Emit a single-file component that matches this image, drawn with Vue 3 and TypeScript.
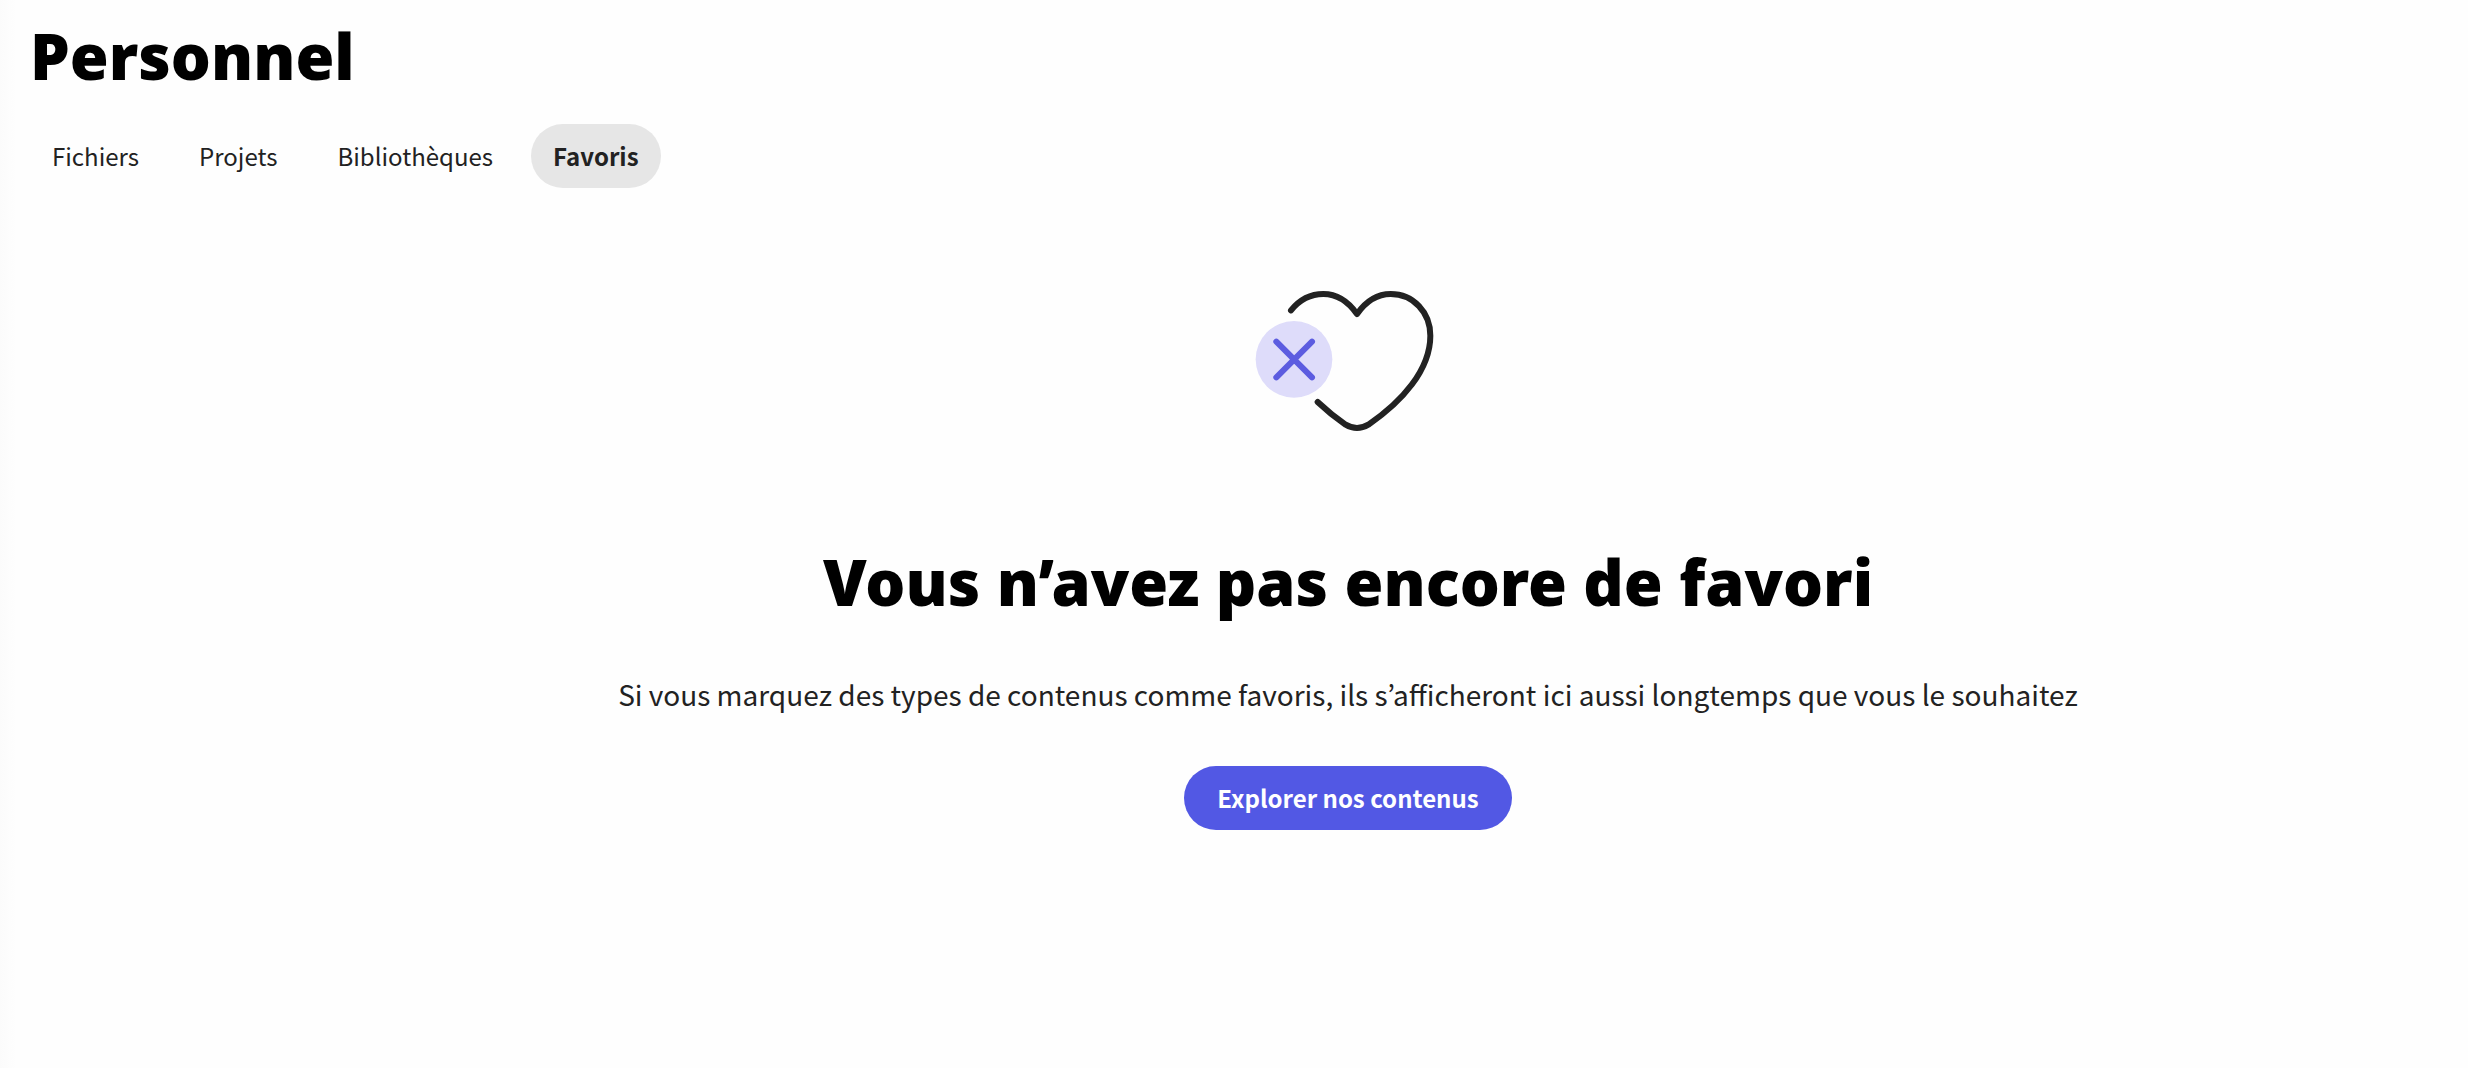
<script setup lang="ts">
import { ref } from 'vue'

const tabs: string[] = ['Fichiers', 'Projets', 'Bibliothèques', 'Favoris']
const active = ref<string>('Favoris')
</script>

<template>
  <main class="page">
    <h1 class="title">Personnel</h1>
    <nav class="tabs" aria-label="Personnel">
      <button
        v-for="tab in tabs"
        :key="tab"
        type="button"
        class="tab"
        :class="{ active: tab === active }"
        @click="active = tab"
      >{{ tab }}</button>
    </nav>
    <section class="empty">
      <svg class="art" viewBox="66 54 576 438" aria-hidden="true">
        <path
          class="heart"
          d="M183 121C208 90 243 72 280 72C320 72 355 95 381 132C407 95 442 72 482 72C550 72 601 127 601 197C601 300 515 396 415 464Q381 484 347 464Q303 434 263 396"
        />
        <circle class="disc" cx="192" cy="268" r="115" />
        <path class="cross" d="M139 215L246 322M246 215L139 322" />
      </svg>
      <h2 class="heading">Vous n’avez pas encore de favori</h2>
      <p class="text">Si vous marquez des types de contenus comme favoris, ils s’afficheront ici aussi longtemps que vous le souhaitez</p>
      <button type="button" class="cta">Explorer nos contenus</button>
    </section>
  </main>
</template>

<style>
body {
  background: #fefefe;
}
</style>

<style scoped>
.page {
  box-sizing: border-box;
  min-height: 100vh;
  padding: 16px 30px;
  background: linear-gradient(to right, #fbfbfb, #fefefe 16px);
  color: #222;
  font-family: "Noto Sans CJK KR", "Noto Sans", sans-serif;
}
.title,
.heading {
  margin: 0;
  color: #000;
  font-family: "Noto Sans", "Open Sans", sans-serif;
  font-size: 63px;
  font-weight: 900;
  line-height: 80px;
}
.tabs {
  display: flex;
  gap: 16px;
  margin-top: 28px;
}
.tab,
.cta {
  height: 64px;
  border: 0;
  border-radius: 32px;
  font-family: inherit;
  font-size: 24px;
  line-height: 32px;
  white-space: nowrap;
  cursor: pointer;
}
.tab {
  padding: 0 22px;
  background: transparent;
  color: #222;
}
.tab.active {
  background: #e6e6e6;
  font-weight: 700;
}
.empty {
  display: flex;
  flex-direction: column;
  align-items: center;
  margin-top: 100px;
  padding-left: 228px;
  text-align: center;
}
.art {
  width: 192px;
  height: 146px;
}
.heart,
.cross {
  fill: none;
  stroke-width: 18;
  stroke-linecap: round;
  stroke-linejoin: round;
}
.heart {
  stroke: #222;
}
.disc {
  fill: #dedcfa;
}
.cross {
  stroke: #5c5ce0;
}
.heading {
  margin-top: 108px;
}
.text {
  margin: 52px 0 0;
  font-size: 28px;
  line-height: 40px;
}
.cta {
  margin-top: 52px;
  padding: 0 33px;
  background: #5258e4;
  color: #fff;
  font-weight: 700;
}
</style>
